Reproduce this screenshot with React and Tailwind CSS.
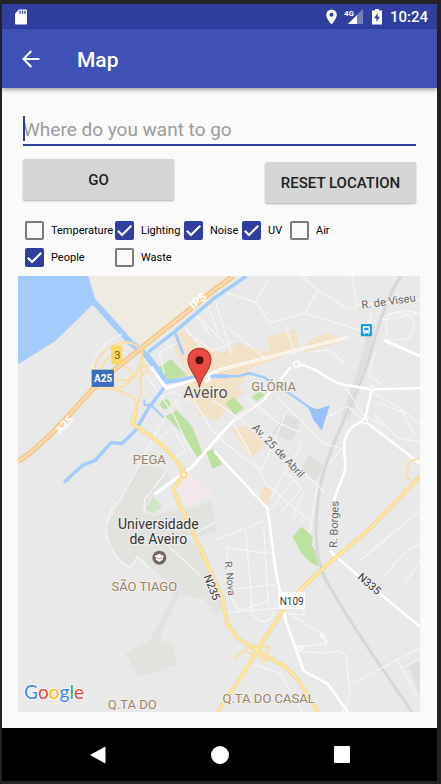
const LAYERS = [
  { id: 'temperature', name: 'Temperature', on: false },
  { id: 'lighting', name: 'Lighting', on: true },
  { id: 'noise', name: 'Noise', on: true },
  { id: 'uv', name: 'UV', on: true },
  { id: 'air', name: 'Air', on: false },
  { id: 'people', name: 'People', on: true },
  { id: 'waste', name: 'Waste', on: false },
];

function StatusBar() {
  return (
    <div className="flex h-[25px] items-center bg-[#303f9f] pl-[13px] pr-[9px] text-white">
      <svg className="h-[16px] w-[12px]" viewBox="0 0 12 16" aria-hidden="true">
        <path fill="#fff" d="M4 0.5h7a1 1 0 0 1 1 1v13a1 1 0 0 1-1 1H1a1 1 0 0 1-1-1V4.5z" />
        <path fill="#303f9f" d="M4.4 1.8h1.300v3H4.400zM6.900 1.800h1.300v3H6.900zM9.300 1.800h1.300v3H9.300z" />
      </svg>
      <div className="ml-auto flex items-center">
        <svg className="h-[16px] w-[11px]" viewBox="0 0 11 16" aria-hidden="true">
          <path fill="#fff" fillRule="evenodd" d="M5.500 0.500A5.300 5.300 0 0 0 0.200 5.800C0.200 9.700 5.500 15.500 5.500 15.500S10.800 9.700 10.800 5.800A5.300 5.300 0 0 0 5.500 0.500zM5.500 3.800a2 2 0 1 1 0 4 2 2 0 0 1 0-4z" />
        </svg>
        <svg className="ml-[7px] h-[17px] w-[20px]" viewBox="0 0 20 17" aria-hidden="true">
          <path fill="#7681c4" d="M19 1v15H4z" />
          <path fill="#fff" d="M13 7v9H4z" />
          <path fill="#303f9f" d="M0 0h10.500v8.500H0z" />
          <text x="0" y="7.500" fill="#fff" fontSize="8" fontWeight="700" fontFamily="Roboto, sans-serif">4G</text>
        </svg>
        <svg className="ml-[8px] h-[16px] w-[10px]" viewBox="0 0 10 16" aria-hidden="true">
          <path fill="#fff" d="M3 0h4v1.500h3v14H0v-14h3z" />
          <path fill="#303f9f" d="M5.700 4L2 9.200h2.400V13L8 7.800H5.700z" />
        </svg>
        <span className="ml-[8px] text-[15px] font-medium leading-[20px]">10:24</span>
      </div>
    </div>
  );
}

function AppBar() {
  return (
    <header className="relative flex h-[59px] items-center bg-[#3f51b5] pl-[19px] text-white shadow-[0_2px_4px_rgba(0,0,0,0.35)]">
      <button type="button" aria-label="Back" className="flex h-[24px] w-[20px] items-center justify-center">
        <svg className="h-[18px] w-[18px]" viewBox="0 0 18 18" fill="none" stroke="#fff" strokeWidth="2" aria-hidden="true">
          <path d="M17.500 9H2M9.300 1L1.500 9l7.800 8" />
        </svg>
      </button>
      <h1 className="ml-[36px] pt-[3px] text-[21px] font-medium leading-[28px]">Map</h1>
    </header>
  );
}

function LayerCheckbox({ id, name, on }) {
  return (
    <div className="flex h-[27px] items-center">
      <span className="relative flex h-[19px] w-[19px] shrink-0">
        <input
          id={id}
          type="checkbox"
          defaultChecked={on}
          className="peer h-[19px] w-[19px] appearance-none rounded-[2px] border-2 border-[#7b7b7b] bg-transparent checked:border-[#303f9f] checked:bg-[#303f9f]"
        />
        <svg className="pointer-events-none absolute inset-0 hidden h-[19px] w-[19px] peer-checked:block" viewBox="0 0 19 19" fill="none" stroke="#fff" strokeWidth="2.200" aria-hidden="true">
          <path d="M2.800 9.800l4.200 4.200L16.300 4.800" />
        </svg>
      </span>
      <label htmlFor={id} className="ml-[7px] text-[11px] leading-[16px] text-black">{name}</label>
    </div>
  );
}

function CityMap() {
  return (
    <svg className="block h-auto w-full" viewBox="19 276 401 435" role="img" aria-label="Map of Aveiro" fontFamily="Roboto, sans-serif">
      <rect x="19" y="276" width="401" height="435" fill="#e9e9e9" />

      {/* land use */}
      <path fill="#efebe1" d="M89 276H232L141 344L96 299z" />
      <path fill="#e2e3df" d="M136 469C146 462 158 466 168 470L171 480C160 485 148 495 145 513L155 516L180 508L198 507L212 500L217 531L190 538L200 549L213 580L224 606L215 615L205 598L180 594L160 638L175 644L177 663L158 671L139 676L126 652L150 640L173 596L176 588L140 556L130 566L111 549L107 527L121 500z" />
      <path fill="#dfe0dc" d="M272 433L286 413L301 420L293 441zM302 468L310 454L325 466L315 480zM408 665L420 658V694z" />
      <path fill="#f5e8eb" d="M176 488L189 470L214 493L188 506z" />
      <g fill="#f3e1c8">
        <path d="M174 346L180 330L195 336L203 345L222 352L232 350L238 341L247 347L270 352L268 337L296 329L300 348L282 357L252 368L240 386L222 394L205 410L192 402L191 390L180 381L186 371z" />
        <path d="M310 340L328 332L345 341L300 354zM232 428L245 425L266 443L252 458z" />
        <path d="M262 487h9l3 9l-8 10l-5-7zM195 398l30 10l-6 12l-20-4zM220 386l25 4l-18 22l-12-6z" />
      </g>
      <g fill="#bde2a0">
        <path d="M159 367L172 359L187 375L167 381zM226 403L234 397L244 408L235 415zM252 397L260 391L265 395L257 401zM166 416L177 410L192 425L203 452L198 457L183 433zM207 452L213 448L223 464L213 468zM293 536L302 526L313 536L312 545L317 551L320 566L311 562L302 553z" />
        <circle cx="166" cy="404" r="5" />
      </g>
      <path fill="#cfe6c8" d="M146 509L154 496L163 506L154 513z" />

      {/* railway */}
      <g fill="none" stroke="#dfdfdf" strokeWidth="4">
        <path d="M401 276C383 304 377 333 367 365C354 402 328 447 320 488C314 525 316 555 324 575C344 613 379 663 412 711" />
        <path strokeWidth="9" d="M374 325L364 365L346 416" />
      </g>
      <path fill="none" stroke="#cfcfcf" strokeWidth="1" d="M401 276C383 304 377 333 367 365C354 402 328 447 320 488C314 525 316 555 324 575C344 613 379 663 412 711" />

      {/* minor streets */}
      <g fill="none" stroke="#f6f6f6" strokeWidth="1.200">
        <path d="M215 298L232 354M218 290L256 302L270 323L305 313L318 290L302 276M256 302L268 280M318 290L348 309L358 307L352 276M305 313L372 334M285 324L296 355M225 325L268 360M189 334L214 351L236 340" />
        <path d="M150 352L177 331L197 315L225 343M165 374L160 352L178 343M185 326L204 351M197 316L211 335M209 306L219 334M145 372L174 414L193 454M156 398L174 392L193 402M190 392L211 428L226 443M174 398L180 408" />
        <path d="M375 352L369 375L383 385M344 363L330 350L308 352M355 305L420 300M382 320C391 310 409 308 420 315M388 334C381 318 391 312 402 313C415 315 419 330 407 339L384 340M344 384L363 414L383 425" />
        <path d="M214 400L266 437L324 491M226 443L262 470L287 411M235 424L267 484L313 523M270 500L285 471L294 479L273 507M294 479L302 488L282 511M305 490L293 518M317 488L310 532M298 436L302 445L286 469M278 397L324 443L342 448L328 465M247 397L278 422L300 432M315 425L330 415L348 406L365 421" />
        <path d="M160 438L174 428L186 450L174 458L160 440M121 500C135 475 151 440 166 417M107 527C109 512 115 503 121 500M107 527C107 550 125 565 131 567L138 556L150 568M168 470L145 499V513M163 540L200 574M188 538L216 521M215 540L265 520M228 544V590L239 610L268 600M246 530L253 608M264 525L269 608M226 547L273 553M228 589L280 583M227 612L302 605L305 614L280 612" />
        <path d="M372 313L367 329M382 320L420 313M384 575L405 552L420 543M360 560L420 510M372 392L394 404L420 423M374 414L397 437L420 442M378 402L403 412L415 435M251 612L251 600M253 612C257 625 273 623 274 610M288 612L323 634L328 642L294 647M300 651L325 652C340 648 348 652 347 661L350 693C350 702 342 711 342 711M325 636L326 650M353 682L420 647M397 659L402 667L420 658M402 667L417 695M253 663L280 672L294 696L303 711M404 585L420 560" />
      </g>

      {/* water */}
      <path fill="#a3ccfd" d="M19 276H89L96 299L94 304L56 341L19 364z" />
      <g fill="none" stroke="#a3ccfd" strokeLinejoin="round">
        <path strokeWidth="6" d="M94 301L132 343L148 356L167 382" />
        <path strokeWidth="4" d="M166 382L202 376L228 376" />
        <path strokeWidth="2.500" d="M220 376L238 376L250 373L264 377L291 394L311 408" />
        <path strokeWidth="3.500" d="M247 276L215 298L176 331L149 352" />
        <path strokeWidth="3" d="M175 331L184 354" />
        <path strokeWidth="3.500" d="M165 387L149 408L137 429L123 443L112 442L96 460L83 465L65 482" />
        <path strokeWidth="2" d="M151 404L164 417M145 399V405L151 404" />
      </g>
      <path fill="#99c2fa" d="M308 406L318 409L330 405L322 430L314 420z" />

      {/* main white streets */}
      <g fill="none" stroke="#ffffff" strokeLinejoin="round">
        <path strokeWidth="3" d="M152 367L167 388L200 378L222 369L349 337M384 340L420 356M232 422L193 466L174 480L155 494" />
        <path strokeWidth="2.500" d="M232 422L264 400L291 367M298 364C318 366 326 380 342 384L370 389L420 388M372 389L365 419L353 426C342 436 344 450 345 458C349 474 334 488 334 505M365 421L385 436L420 463M215 451L268 508L276 570L286 620L304 670L328 683L348 711M330 550L350 568L420 626" />
        <circle cx="297" cy="364" r="3" strokeWidth="1.500" fill="#e9e9e9" />
        <circle cx="365" cy="421" r="2.500" strokeWidth="1.500" fill="#e9e9e9" />
        <circle cx="207" cy="378" r="3" strokeWidth="2.500" fill="#e9e9e9" />
        <circle cx="372" cy="388" r="2" strokeWidth="1" fill="#e9e9e9" />
        <circle cx="323" cy="635" r="2" strokeWidth="1" />
        <circle cx="300" cy="647" r="2.500" strokeWidth="1" />
      </g>
      <path fill="none" stroke="#f3e1c8" strokeWidth="0.800" d="M215 371L349 337M234 421L264 399" />

      {/* motorway and junction */}
      <g fill="none" stroke="#f9dfae" strokeWidth="2.200" strokeLinejoin="round">
        <path d="M95 371C96 352 116 342 128 342C141 344 143 352 142 362L137 374C129 384 124 391 95 388" />
        <path d="M101 370C113 379 121 381 128 380L135 374L116 358C112 352 106 360 101 370M101 388L120 390L132 396C140 404 138 413 135 423M143 347L142 372L141 393L134 424M142 362L148 370L139 379" />
        <path d="M419 458L410 461L406 475L412 481M234 658L251 645L270 646L261 664M246 650L268 660" />
      </g>
      <path fill="none" stroke="#f3f3f1" strokeWidth="1.500" d="M92 368C96 350 113 337 123 334" />
      <path fill="none" stroke="#f3ca91" strokeWidth="5.500" d="M19 461C34 452 53 433 67 418L96 386L117 368L148 343L216 289L234 276" />
      <path fill="none" stroke="#fae0b8" strokeWidth="1.500" d="M19 461C34 452 53 433 67 418L96 386L117 368L148 343L216 289L234 276" />

      {/* national roads */}
      <g fill="none" strokeLinejoin="round" strokeLinecap="round">
        <path stroke="#f2d68b" strokeWidth="4" d="M137 410L133 423C149 435 166 442 184 470L182 477L174 489L178 499L203 552L222 596L228 624L239 638L263 653L286 666L300 681L318 711M218 711L239 680L258 649L288 602L312 578L337 556L369 529L420 476" />
        <path stroke="#ffe7a2" strokeWidth="2.500" d="M137 410L133 423C149 435 166 442 184 470L182 477L174 489L178 499L203 552L222 596L228 624L239 638L263 653L286 666L300 681L318 711M218 711L239 680L258 649L288 602L312 578L337 556L369 529L420 476" />
        <circle cx="184" cy="474" r="3" stroke="#f7dc98" strokeWidth="2" fill="#fff3cc" />
      </g>

      {/* road shields */}
      <rect x="112" y="345" width="11" height="19" rx="1" fill="#fbd960" />
      <text x="118" y="359" fontSize="11" textAnchor="middle" fill="#765e20">3</text>
      <rect x="93" y="370" width="21" height="16" fill="#3b6fbd" stroke="#2b62b5" />
      <text x="104" y="382" fontSize="10" fontWeight="700" textAnchor="middle" fill="#fff">A25</text>
      <rect x="279" y="591" width="26" height="17" fill="#fff" />
      <text x="292" y="604" fontSize="10" textAnchor="middle" fill="#333">N109</text>
      <g fill="#fff" fontSize="12" fontWeight="700">
        <text textAnchor="middle" transform="translate(201 304) rotate(-38)">IP5</text>
        <text fontSize="11" textAnchor="middle" transform="translate(68 427) rotate(-47)">A25</text>
      </g>

      {/* street names */}
      <g fill="#666" fontSize="11" stroke="#f1f1f1" strokeWidth="2" paintOrder="stroke" textAnchor="middle">
        <text transform="translate(389 305) rotate(-8)">R. de Viseu</text>
        <text transform="translate(276 453) rotate(46)">Av. 25 de Abril</text>
        <text transform="translate(338 524) rotate(-88)">R. Borges</text>
        <text fontSize="10" transform="translate(227 578) rotate(84)">R. Nova</text>
        <g fill="#333">
          <text transform="translate(209 588) rotate(68)">N235</text>
          <text transform="translate(367 586) rotate(41)">N335</text>
        </g>
      </g>

      {/* station */}
      <rect x="361" y="324" width="11" height="12" rx="1" fill="#139de0" />
      <path fill="#fff" fillRule="evenodd" d="M364 326h5a1 1 0 0 1 1 1v6h-1v1h-1v-1h-3v1h-1v-1h-1v-6a1 1 0 0 1 1-1zM364.500 327.500v2.500h4v-2.500zM364 331.300v1h1v-1zM368 331.300v1h1v-1z" />

      {/* university */}
      <circle cx="160" cy="557" r="7" fill="#766660" />
      <path fill="#fff" d="M155 555.500L160 553L165 555.500L163.500 556.500V559L160 561L156.500 559V556.500z" />
      <path stroke="#766660" strokeWidth="0.700" d="M157 557L160 558.300L163 557" fill="none" />

      {/* district names */}
      <g fill="#9b8267" fontSize="14" textAnchor="middle" stroke="#f1f1ef" strokeWidth="2" paintOrder="stroke">
        <text x="274" y="391" fontSize="13">GLÓRIA</text>
        <text x="150" y="464" fontSize="13">PEGA</text>
        <text x="145" y="590" fontSize="13">SÃO TIAGO</text>
        <text x="133" y="708" fontSize="13">Q.TA DO</text>
        <text x="269" y="702" fontSize="13">Q.TA DO CASAL</text>
      </g>
      <g fill="#333" textAnchor="middle" stroke="#f1f1ef" strokeWidth="2" paintOrder="stroke">
        <text x="206" y="398" fontSize="16" fill="#5a5048">Aveiro</text>
        <text x="159" y="528" fontSize="14">Universidade</text>
        <text x="159" y="543" fontSize="14">de Aveiro</text>
      </g>

      {/* marker */}
      <path fill="#ea4a42" stroke="#a52d27" strokeWidth="1" d="M200 387.500C199 377 188.500 370 188.500 359.500A11.500 11.500 0 0 1 211.500 359.500C211.500 370 201 377 200 387.500z" />
      <circle cx="200" cy="360" r="4" fill="#4b0f0c" />

      {/* attribution */}
      <text x="25" y="698" fontSize="19" fontFamily="Lato, sans-serif" fontWeight="400" stroke="#f8f8f8" strokeWidth="2" paintOrder="stroke">
        <tspan fill="#4285f4">G</tspan>
        <tspan fill="#ea4335">o</tspan>
        <tspan fill="#fbbc05">o</tspan>
        <tspan fill="#4285f4">g</tspan>
        <tspan fill="#34a853">l</tspan>
        <tspan fill="#ea4335">e</tspan>
      </text>
    </svg>
  );
}

function NavBar() {
  return (
    <nav className="flex h-[53px] items-center justify-center gap-[98px] bg-black">
      <button type="button" aria-label="Back" className="flex h-[24px] w-[24px] items-center justify-center">
        <svg className="h-[18px] w-[16px]" viewBox="0 0 16 18" aria-hidden="true">
          <path fill="#fff" d="M15.500 1.500v15a.7.7 0 0 1-1 .6L.8 9.500a.6.6 0 0 1 0-1L14.500.9a.7.7 0 0 1 1 .6z" />
        </svg>
      </button>
      <button type="button" aria-label="Home" className="flex h-[24px] w-[24px] items-center justify-center">
        <span className="h-[18px] w-[18px] rounded-full bg-white" />
      </button>
      <button type="button" aria-label="Recent apps" className="flex h-[24px] w-[24px] items-center justify-center">
        <span className="h-[17px] w-[16px] rounded-[1px] bg-white" />
      </button>
    </nav>
  );
}

const BUTTON =
  'h-[41px] w-[151px] rounded-[2px] bg-[#d6d6d6] text-[15px] font-medium leading-[20px] text-[#212121] shadow-[0_1px_2px_rgba(0,0,0,0.3)]';

export default function App() {
  return (
    <div className="min-h-screen bg-[#232323] py-[4px] pl-[2px] pr-[4px] font-[Roboto,sans-serif]">
      <div className="bg-[#fafafa]">
        <StatusBar />
        <AppBar />
        <main className="pb-[16px] pl-[16px] pr-[17px] pt-[28px]">
          <form className="pl-[5px] pr-[4px]" onSubmit={(e) => e.preventDefault()}>
            <div className="relative">
              <input
                type="text"
                aria-label="Destination"
                placeholder="Where do you want to go"
                className="block h-[30px] w-full border-b-2 border-[#303f9f] bg-transparent pb-[2px] text-[19px] text-[#212121] outline-none placeholder:text-[#9c9c9c]"
              />
              <span className="absolute left-0 top-0 h-[25px] w-[2px] bg-[#303f9f]" />
            </div>
            <div className="mt-[13px] flex h-[44px] justify-between">
              <button type="submit" className={`${BUTTON} self-start`}>GO</button>
              <button type="button" className={`${BUTTON} self-end`}>RESET LOCATION</button>
            </div>
          </form>
          <div className="mt-[14px] grid grid-cols-[90px_69px_58px_48px_auto] pb-[5px] pl-[7px]">
            {LAYERS.map((layer) => (
              <LayerCheckbox key={layer.id} {...layer} />
            ))}
          </div>
          <CityMap />
        </main>
        <NavBar />
      </div>
    </div>
  );
}
